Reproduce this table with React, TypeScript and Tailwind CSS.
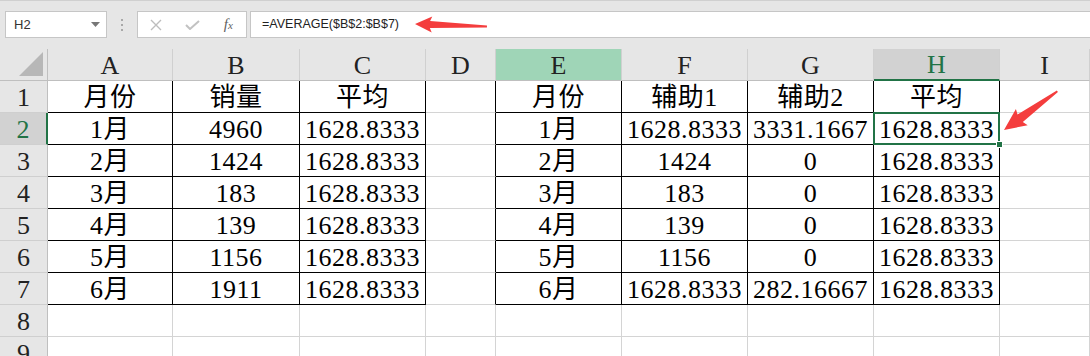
import React from "react";

const COLS = ["A", "B", "C", "D", "E", "F", "G", "H", "I"];

const COL_WIDTHS = [
  "w-[125px]",
  "w-[127px]",
  "w-[126px]",
  "w-[70px]",
  "w-[126px]",
  "w-[126px]",
  "w-[126px]",
  "w-[126px]",
  "w-[90px]",
];

const ROWS: string[][] = [
  ["月份", "销量", "平均", "", "月份", "辅助1", "辅助2", "平均", ""],
  ["1月", "4960", "1628.8333", "", "1月", "1628.8333", "3331.1667", "1628.8333", ""],
  ["2月", "1424", "1628.8333", "", "2月", "1424", "0", "1628.8333", ""],
  ["3月", "183", "1628.8333", "", "3月", "183", "0", "1628.8333", ""],
  ["4月", "139", "1628.8333", "", "4月", "139", "0", "1628.8333", ""],
  ["5月", "1156", "1628.8333", "", "5月", "1156", "0", "1628.8333", ""],
  ["6月", "1911", "1628.8333", "", "6月", "1628.8333", "282.16667", "1628.8333", ""],
  ["", "", "", "", "", "", "", "", ""],
  ["", "", "", "", "", "", "", "", ""],
];

// bordered ranges: A1:C7 and E1:H7
function inTable(r: number, c: number) {
  if (r < 1 || r > 7) return false;
  return (c >= 0 && c <= 2) || (c >= 4 && c <= 7);
}

const SERIF = "font-['Liberation_Serif','Noto_Sans_CJK_SC',serif]";

function Arrow({ x, y, angle, len, head, half }: { x: number; y: number; angle: number; len: number; head: number; half: number }) {
  const neck = half * 0.45;
  const pts = [
    [0, 0],
    [head, -half],
    [head - 2, -neck],
    [len, -0.9],
    [len, 0.9],
    [head - 2, neck],
    [head, half],
  ]
    .map((p) => p.join(","))
    .join(" ");
  return <polygon points={pts} fill="#f43d3d" transform={`translate(${x} ${y}) rotate(${angle})`} />;
}

export default function App() {
  return (
    <div className="relative w-[1090px] h-[356px] overflow-hidden bg-white font-['Liberation_Sans',sans-serif]">
      {/* Name box + formula bar */}
      <div className="h-[49px] bg-[#e6e6e6] border-t border-[#d0d0d0] flex items-start pt-[10px] pl-[5px]">
        <div className="w-[102px] h-[27px] bg-white border border-[#c6c6c6] flex items-center justify-between pl-[8px] pr-[6px]">
          <span className="text-[13px] text-[#333]">H2</span>
          <svg width="9" height="5" viewBox="0 0 9 5">
            <polygon points="0,0 9,0 4.5,5" fill="#777" />
          </svg>
        </div>
        <div className="w-[30px] h-[27px] flex flex-col items-center justify-center gap-[3px]">
          <span className="w-[2px] h-[2px] bg-[#a8a8a8]" />
          <span className="w-[2px] h-[2px] bg-[#a8a8a8]" />
          <span className="w-[2px] h-[2px] bg-[#a8a8a8]" />
        </div>
        <div className="w-[110px] h-[27px] bg-white border border-[#c6c6c6] flex items-center">
          <div className="w-[37px] flex justify-center">
            <svg width="12" height="12" viewBox="0 0 12 12">
              <path d="M1 1 L11 11 M11 1 L1 11" stroke="#bdbdbd" strokeWidth="1.4" />
            </svg>
          </div>
          <div className="w-[37px] flex justify-center">
            <svg width="15" height="10" viewBox="0 0 15 10">
              <path d="M1 5 L5 9 L14 1" stroke="#c2c2c2" strokeWidth="2" fill="none" />
            </svg>
          </div>
          <div className="w-[36px] flex justify-center">
            <span className="font-['Liberation_Serif',serif] italic text-[15px] text-[#5f5f5f] leading-none">
              f<span className="text-[11px]">x</span>
            </span>
          </div>
        </div>
        <div className="ml-[3px] flex-1 h-[27px] bg-white border-y border-l border-[#c6c6c6] flex items-center pl-[11px]">
          <span className="text-[12.5px] text-[#222]">=AVERAGE($B$2:$B$7)</span>
        </div>
      </div>

      {/* Sheet grid */}
      <div className={`flex flex-col ${SERIF}`}>
        {/* column headers */}
        <div className="flex h-[32px]">
          <div className="w-[48px] h-[32px] shrink-0 bg-[#e6e6e6] border-r border-b border-[#bfbfbf] flex items-end justify-end pr-[4px] pb-[4px]">
            <svg width="24" height="24" viewBox="0 0 24 24">
              <polygon points="24,0 24,24 0,24" fill="#b7b7b7" />
            </svg>
          </div>
          {COLS.map((col, c) => (
            <div
              key={col}
              className={`${COL_WIDTHS[c]} shrink-0 h-[32px] flex items-center justify-center pt-[2px] text-[26px] leading-none border-r border-r-[#d0d0d0] ${
                col === "H"
                  ? "bg-[#d2d2d2] text-[#217346] border-b-2 border-b-[#217346]"
                  : col === "E"
                    ? "bg-[#9fd5b7] text-[#222] border-b border-b-[#bfbfbf]"
                    : "bg-[#e6e6e6] text-[#222] border-b border-b-[#bfbfbf]"
              }`}
            >
              {col}
            </div>
          ))}
        </div>

        {/* rows */}
        {ROWS.map((cells, i) => {
          const r = i + 1;
          return (
            <div key={r} className="flex h-[32px]">
              <div
                className={`w-[48px] h-[32px] shrink-0 flex items-center justify-center pt-[2px] text-[26px] leading-none border-b border-b-[#cfcfcf] ${
                  r === 2
                    ? "bg-[#d2d2d2] text-[#217346] border-r-2 border-r-[#217346]"
                    : "bg-[#e6e6e6] text-[#222] border-r border-r-[#bfbfbf]"
                }`}
              >
                {r}
              </div>
              {cells.map((v, c) => {
                const rightBorder = inTable(r, c) || inTable(r, c + 1) ? "border-r-black" : "border-r-[#d4d4d4]";
                const bottomBorder = inTable(r, c) || inTable(r + 1, c) ? "border-b-black" : "border-b-[#d4d4d4]";
                const selected = r === 2 && c === 7;
                return (
                  <div
                    key={c}
                    className={`relative ${COL_WIDTHS[c]} shrink-0 h-[32px] border-r border-b ${rightBorder} ${bottomBorder} flex items-center justify-center pt-[2px] text-[26px] leading-none tracking-[0.5px] text-black whitespace-nowrap`}
                  >
                    {v}
                    {selected && (
                      <div className="absolute z-10 -left-[1px] -top-[1px] -right-[1px] -bottom-[1px] border-2 border-[#217346]">
                        <span className="absolute -right-[5px] -bottom-[5px] w-[7px] h-[7px] bg-[#217346] border border-white" />
                      </div>
                    )}
                  </div>
                );
              })}
            </div>
          );
        })}
      </div>

      {/* red callout arrows */}
      <svg className="absolute inset-0 pointer-events-none z-20" width="1090" height="356">
        <Arrow x={415} y={24} angle={2} len={72} head={17} half={8} />
        <Arrow x={1004} y={130} angle={-36} len={66} head={22} half={10} />
      </svg>
    </div>
  );
}
